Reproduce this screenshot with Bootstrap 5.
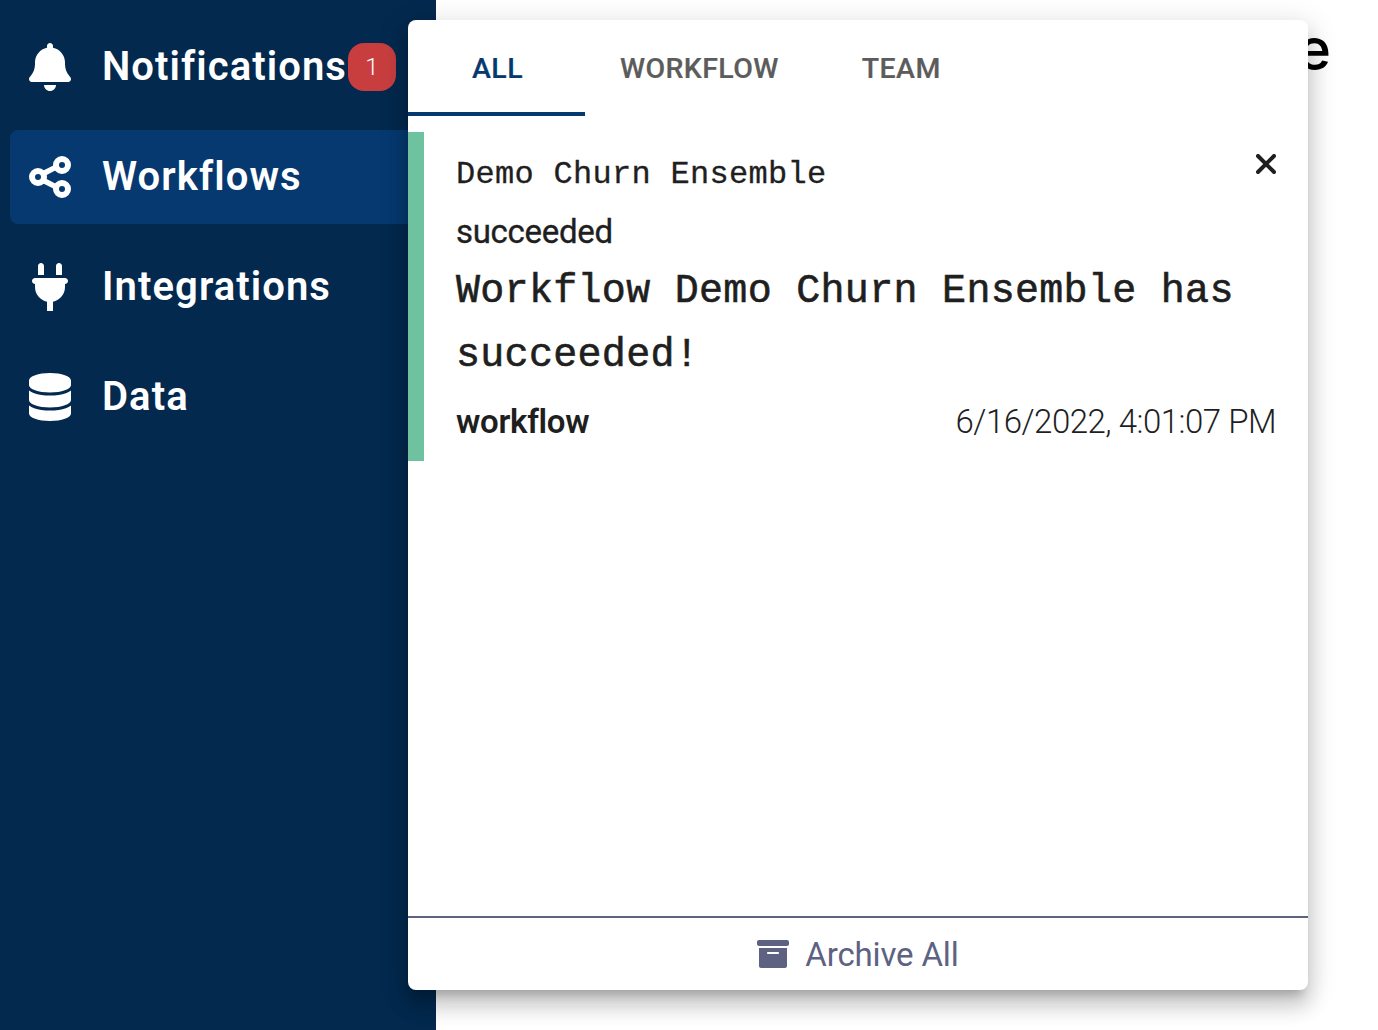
<!DOCTYPE html>
<html lang="en">
<head>
<meta charset="utf-8">
<meta name="viewport" content="width=device-width, initial-scale=1">
<title>Notifications</title>
<link href="https://cdn.jsdelivr.net/npm/bootstrap@5.3.0/dist/css/bootstrap.min.css" rel="stylesheet">
<style>
  body { font-family: Roboto, "Liberation Sans", sans-serif; color: #1f1f1f; background: #fff; }
  .side-menu { width: 436px; background: #03294e; padding: 20px 10px; gap: 16px; }
  .side-item { height: 94px; width: 416px; padding: 0 0 0 17px; border-radius: 8px; color: #fff; font-size: 40px; font-weight: 600; letter-spacing: 1.07px; }
  .side-item:hover { color: #fff; }
  .side-item.active { background: #063970; }
  .side-icon { width: 46px; margin-right: 29px; }
  .side-icon svg { display: block; fill: #fff; }
  .count-pill { width: 48px; height: 48px; margin-left: 1px; border-radius: 16px; background: #c83e3f; font-size: 24px; font-weight: 300; letter-spacing: 0; }
  .page-title { font-family: Inter, "Liberation Sans", sans-serif; font-size: 58px; font-weight: 500; line-height: 70px; padding: 14px 47px 0 0; color: #000; }
  .notice-panel { left: 408px; top: 20px; width: 900px; height: 970px; border-radius: 8px;
    box-shadow: 0 10px 10px -6px rgba(0,0,0,.2), 0 16px 20px 2px rgba(0,0,0,.14), 0 6px 28px 4px rgba(0,0,0,.12); }
  .notice-tabs { height: 96px; }
  .notice-tabs .nav-link { min-width: 177px; padding: 5px 33px 0 35px; border-bottom: 4px solid transparent; border-radius: 0; color: #5c5c5c; font-size: 28.5px; font-weight: 500; letter-spacing: .4px; line-height: 87px; text-align: center; text-transform: uppercase; -webkit-text-stroke: .2px currentColor; }
  .notice-tabs .nav-link.active { color: #063970; border-color: #063970; }
  .notice { height: 329px; margin-top: 16px; border-left: 16px solid #6ec2a0; padding: 16px 32px 0; }
  .mono { font-family: "Liberation Mono", monospace; letter-spacing: .3px; -webkit-text-stroke: .3px #1f1f1f; }
  .notice-name { font-size: 32px; line-height: 48px; margin-top: 3px; }
  .notice-state { font-size: 33px; line-height: 48px; margin-top: 9px; letter-spacing: -.3px; -webkit-text-stroke: .35px #1f1f1f; }
  .notice-text { font-size: 40px; line-height: 64px; margin-top: 4px; -webkit-text-stroke-width: .6px; }
  .notice-meta { font-size: 33px; line-height: 48px; margin-top: 10px; }
  .notice-date { font-weight: 300; letter-spacing: -.5px; }
  .notice-kind { font-weight: 600; letter-spacing: -.3px; }
  .close-mark { margin-top: 6px; }
  .archive-bar { height: 74px; border-top: 2px solid #5e6282; color: #5e6282; font-size: 33px; gap: 16px; letter-spacing: -.15px; }
  .archive-label { padding-top: 2px; }
</style>
<script src="https://cdn.jsdelivr.net/npm/bootstrap@5.3.0/dist/js/bootstrap.bundle.min.js"></script>
</head>
<body class="overflow-hidden">
<div class="d-flex vh-100">
  <nav class="side-menu nav flex-column flex-nowrap flex-shrink-0">
    <a class="side-item d-flex align-items-center text-decoration-none" href="#">
      <span class="side-icon d-flex justify-content-center"><svg width="42" height="48" viewBox="0 0 448 512"><path d="M224 0c-17.7 0-32 14.3-32 32V51.2C119 66 64 130.6 64 208v18.8c0 47-17.3 92.4-48.5 127.6l-7.4 8.3c-8.4 9.4-10.4 22.9-5.3 34.4S19.4 416 32 416H416c12.6 0 24-7.4 29.2-18.9s3.1-25-5.3-34.4l-7.4-8.3C401.3 319.2 384 273.9 384 226.8V208c0-77.4-55-142-128-156.8V32c0-17.7-14.3-32-32-32zm45.3 493.3c12-12 18.7-28.3 18.7-45.3H160c0 17 6.7 33.3 18.7 45.3s28.3 18.7 45.3 18.7s33.3-6.7 45.3-18.7z"/></svg></span>
      <span>Notifications</span><span class="count-pill d-flex align-items-center justify-content-center">1</span>
    </a>
    <a class="side-item active d-flex align-items-center text-decoration-none" href="#">
      <span class="side-icon d-flex justify-content-center"><svg width="42" height="42" viewBox="0 0 42 42"><g style="fill:none" stroke="#fff" stroke-width="6"><path d="M14.5 17.5 26 11.7M14.5 24.5 26 30.3" stroke-width="5.4"/><circle cx="9" cy="21" r="6"/><circle cx="33" cy="9" r="6"/><circle cx="33" cy="33" r="6"/></g></svg></span>
      <span>Workflows</span>
    </a>
    <a class="side-item d-flex align-items-center text-decoration-none" href="#">
      <span class="side-icon d-flex justify-content-center"><svg width="36" height="48" viewBox="0 0 384 512"><path d="M96 0C78.3 0 64 14.3 64 32v96h64V32c0-17.7-14.3-32-32-32zM288 0c-17.7 0-32 14.3-32 32v96h64V32c0-17.7-14.3-32-32-32zM32 160c-17.7 0-32 14.3-32 32s14.3 32 32 32v32c0 77.4 55 142 128 156.8V512h64V412.8C297 398 352 333.4 352 256V224c17.7 0 32-14.3 32-32s-14.3-32-32-32H32z"/></svg></span>
      <span>Integrations</span>
    </a>
    <a class="side-item d-flex align-items-center text-decoration-none" href="#">
      <span class="side-icon d-flex justify-content-center"><svg width="42" height="48" viewBox="0 0 448 512"><path d="M448 80v48c0 44.2-100.3 80-224 80S0 172.2 0 128V80C0 35.8 100.3 0 224 0S448 35.8 448 80zM393.2 214.7c20.8-7.4 39.9-16.9 54.8-28.6V288c0 44.2-100.3 80-224 80S0 332.2 0 288V186.1c14.9 11.8 34 21.2 54.8 28.6C99.7 230.7 159.5 240 224 240s124.3-9.3 169.2-25.3zM0 346.1c14.9 11.8 34 21.2 54.8 28.6C99.7 390.7 159.5 400 224 400s124.3-9.3 169.2-25.3c20.8-7.4 39.9-16.9 54.8-28.6V432c0 44.2-100.3 80-224 80S0 476.2 0 432V346.1z"/></svg></span>
      <span>Data</span>
    </a>
  </nav>
  <main class="flex-grow-1">
    <div class="page-title text-end">e</div>
  </main>
</div>

<!-- Notification popover, over the menu and the page -->
<section class="notice-panel position-absolute bg-white d-flex flex-column">
  <div class="notice-tabs nav flex-nowrap">
    <a class="nav-link active" href="#">All</a>
    <a class="nav-link" href="#">Workflow</a>
    <a class="nav-link" href="#">Team</a>
  </div>
  <article class="notice">
    <div class="d-flex justify-content-between align-items-start">
      <div class="notice-name mono">Demo Churn Ensemble</div>
      <svg class="close-mark" width="20" height="20" viewBox="0 0 20 20" fill="none" stroke="#1f1f1f" stroke-width="4" stroke-linecap="round"><path d="M2 2 18 18M18 2 2 18"/></svg>
    </div>
    <div class="notice-state">succeeded</div>
    <div class="notice-text mono">Workflow Demo Churn Ensemble has succeeded!</div>
    <div class="notice-meta d-flex justify-content-between">
      <span class="notice-kind">workflow</span>
      <span class="notice-date">6/16/2022, 4:01:07 PM</span>
    </div>
  </article>
  <div class="archive-bar mt-auto d-flex align-items-center justify-content-center">
    <svg width="32" height="28" viewBox="0 32 512 448" fill="currentColor"><path d="M32 448c0 17.7 14.3 32 32 32h384c17.7 0 32-14.3 32-32V160H32v288zm128-208c0-8.800 7.200-16 16-16h160c8.800 0 16 7.200 16 16s-7.200 16-16 16H176c-8.800 0-16-7.200-16-16zM480 32H32C14.300 32 0 46.300 0 64v32c0 17.700 14.300 32 32 32h448c17.700 0 32-14.300 32-32V64c0-17.700-14.300-32-32-32z"/></svg>
    <span class="archive-label">Archive All</span>
  </div>
</section>
</body>
</html>
